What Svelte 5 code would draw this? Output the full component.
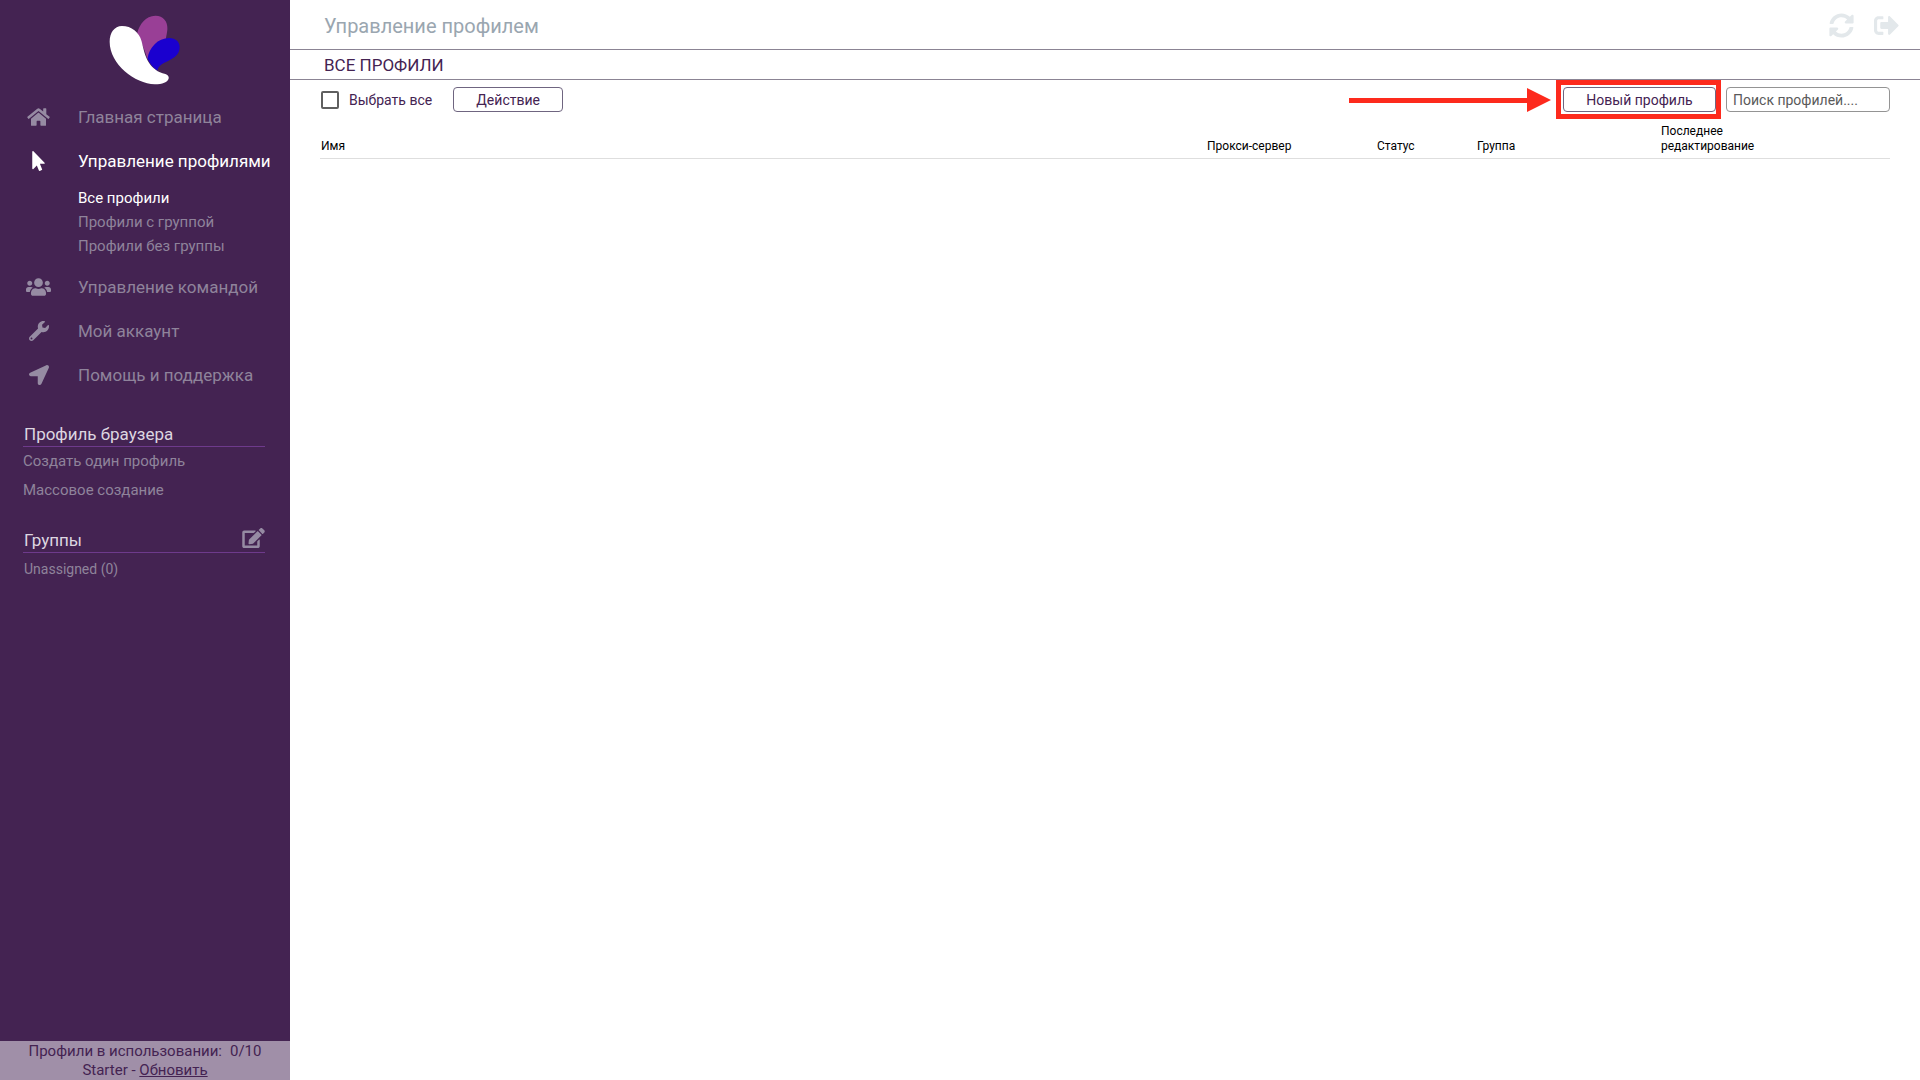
<script lang="ts">
    type NavItem = {
        label: string;
        icon: string;
        active?: boolean;
        children?: string[];
    };

    type Icon = { box: string; width: number; height: number; path: string };

    const icons: Record<string, Icon> = {
        home: {
            box: "0 0 576 512", width: 23, height: 20,
            path: "M280.37 148.26L96 300.11V464a16 16 0 0 0 16 16l112.06-.29a16 16 0 0 0 15.92-16V368a16 16 0 0 1 16-16h64a16 16 0 0 1 16 16v95.64a16 16 0 0 0 16 16.05L464 480a16 16 0 0 0 16-16V300L295.67 148.26a12.19 12.19 0 0 0-15.3 0zM571.6 251.47L488 182.56V44.05a12 12 0 0 0-12-12h-56a12 12 0 0 0-12 12v72.61L318.47 43a48 48 0 0 0-61 0L4.34 251.47a12 12 0 0 0-1.6 16.9l25.5 31A12 12 0 0 0 45.15 301l235.22-193.74a12.19 12.19 0 0 1 15.3 0L530.9 301a12 12 0 0 0 16.9-1.6l25.5-31a12 12 0 0 0-1.7-16.93z"
        },
        pointer: {
            box: "0 0 320 512", width: 13, height: 20,
            path: "M302.189 329.126H196.105l55.831 135.993c3.889 9.428-.555 19.999-9.444 23.999l-49.165 21.427c-9.165 4-19.443-.571-23.332-9.714l-53.053-129.136-86.664 89.138C18.729 472.71 0 463.554 0 447.977V18.299C0 1.899 19.921-6.096 30.277 5.443l284.412 292.542c11.472 11.179 3.007 31.141-12.5 31.141z"
        },
        users: {
            box: "0 0 640 512", width: 25, height: 20,
            path: "M96 224c35.3 0 64-28.7 64-64s-28.7-64-64-64-64 28.7-64 64 28.7 64 64 64zm448 0c35.3 0 64-28.7 64-64s-28.7-64-64-64-64 28.7-64 64 28.7 64 64 64zm32 32h-64c-17.6 0-33.5 7.1-45.1 18.6 40.3 22.1 68.9 62 75.1 109.4h66c17.7 0 32-14.3 32-32v-32c0-35.3-28.7-64-64-64zm-256 0c61.9 0 112-50.1 112-112S381.9 32 320 32 208 82.1 208 144s50.1 112 112 112zm76.8 32h-8.3c-20.8 10-43.9 16-68.5 16s-47.6-6-68.5-16h-8.3C179.6 288 128 339.6 128 403.2V432c0 26.5 21.5 48 48 48h288c26.5 0 48-21.5 48-48v-28.8c0-63.6-51.6-115.2-115.2-115.2zm-223.7-13.4C161.5 263.1 145.6 256 128 256H64c-35.3 0-64 28.7-64 64v32c0 17.7 14.3 32 32 32h65.9c6.3-47.4 34.9-87.3 75.2-109.4z"
        },
        wrench: {
            box: "0 0 512 512", width: 20, height: 20,
            path: "M507.73 109.1c-2.24-9.03-13.54-12.09-20.12-5.51l-74.36 74.36-67.88-11.31-11.31-67.88 74.36-74.36c6.62-6.62 3.43-17.9-5.66-20.16-47.38-11.74-99.55.91-136.58 37.93-39.64 39.64-50.55 97.1-34.05 147.2L18.74 402.76c-24.99 24.99-24.99 65.51 0 90.5 24.99 24.99 65.51 24.99 90.5 0l213.21-213.21c50.12 16.71 107.47 5.68 147.37-34.22 37.07-37.07 49.7-89.32 37.91-136.73zM64 472c-13.25 0-24-10.75-24-24 0-13.26 10.75-24 24-24s24 10.74 24 24c0 13.25-10.75 24-24 24z"
        },
        location: {
            box: "0 0 512 512", width: 20, height: 20,
            path: "M444.52 3.52L28.74 195.42c-47.97 22.39-31.98 92.75 19.19 92.75h175.91v175.91c0 51.17 70.36 67.17 92.75 19.19l191.9-415.78c15.99-38.39-25.59-79.97-63.97-63.97z"
        },
        edit: {
            box: "0 0 576 512", width: 23, height: 20,
            path: "M402.6 83.2l90.2 90.2c3.8 3.8 3.8 10 0 13.8L274.4 405.6l-92.8 10.3c-12.4 1.4-22.9-9.1-21.5-21.5l10.3-92.8L388.8 83.2c3.8-3.8 10-3.8 13.8 0zm162-22.9l-48.8-48.8c-15.2-15.2-39.9-15.2-55.2 0l-35.4 35.4c-3.8 3.8-3.8 10 0 13.8l90.2 90.2c3.8 3.8 10 3.8 13.8 0l35.4-35.4c15.2-15.3 15.2-40 0-55.2zM384 346.2V448H64V128h229.8c3.2 0 6.2-1.3 8.5-3.5l40-40c7.6-7.6 2.2-20.5-8.5-20.5H48C21.5 64 0 85.5 0 112v352c0 26.5 21.5 48 48 48h352c26.5 0 48-21.5 48-48V306.2c0-10.7-12.9-16-20.5-8.5l-40 40c-2.2 2.3-3.5 5.3-3.5 8.5z"
        },
        sync: {
            box: "0 0 512 512", width: 25, height: 25,
            path: "M370.72 133.28C339.458 104.008 298.888 87.962 255.848 88c-77.458.068-144.328 53.178-162.791 126.85-1.344 5.363-6.122 9.15-11.651 9.15H24.103c-7.498 0-13.194-6.807-11.807-14.176C33.933 94.924 134.813 8 256 8c66.448 0 126.791 26.136 171.315 68.685L463.03 40.97C478.149 25.851 504 36.559 504 57.941V192c0 13.255-10.745 24-24 24H345.941c-21.382 0-32.09-25.851-16.971-40.971l41.75-41.749zM32 296h134.059c21.382 0 32.09 25.851 16.971 40.971l-41.75 41.75c31.262 29.273 71.835 45.319 114.876 45.28 77.418-.07 144.315-53.144 162.787-126.849 1.344-5.363 6.122-9.15 11.651-9.15h57.304c7.498 0 13.194 6.807 11.807 14.176C478.067 417.076 377.187 504 256 504c-66.448 0-126.791-26.136-171.315-68.685L48.97 471.03C33.851 486.149 8 475.441 8 454.059V320c0-13.255 10.745-24 24-24z"
        },
        signOut: {
            box: "0 0 512 512", width: 25, height: 25,
            path: "M497 273L329 441c-15 15-41 4.5-41-17v-96H152c-13.3 0-24-10.7-24-24v-96c0-13.3 10.7-24 24-24h136V88c0-21.4 25.9-32 41-17l168 168c9.3 9.4 9.3 24.6 0 34zM192 436v-40c0-6.6-5.4-12-12-12H96c-17.7 0-32-14.3-32-32V160c0-17.7 14.3-32 32-32h84c6.6 0 12-5.4 12-12V76c0-6.6-5.4-12-12-12H96c-53 0-96 43-96 96v192c0 53 43 96 96 96h84c6.6 0 12-5.4 12-12z"
        }
    };

    const nav: NavItem[] = [
        { label: "Главная страница", icon: "home" },
        {
            label: "Управление профилями",
            icon: "pointer",
            active: true,
            children: ["Все профили", "Профили с группой", "Профили без группы"]
        },
        { label: "Управление командой", icon: "users" },
        { label: "Мой аккаунт", icon: "wrench" },
        { label: "Помощь и поддержка", icon: "location" }
    ];

    let currentView = $state("Все профили");
    let allSelected = $state(false);
    let search = $state("");
</script>

{#snippet glyph(name: string)}
    <svg
        viewBox={icons[name].box}
        width={icons[name].width}
        height={icons[name].height}
        fill="currentColor"
        aria-hidden="true">
        <path d={icons[name].path} />
    </svg>
{/snippet}

<div class="app">
    <aside class="sidebar">
        <a class="logo" href="#home" aria-label="Главная">
            <svg viewBox="26 30 214 210" width="71" height="70" aria-hidden="true">
                <path fill="#993f96" d="M142 162C132 130 120 105 111 84C118 58 136 32 166 32C190 32 203 50 202 72C201 84 199 92 197 104Z" />
                <path fill="#1a00cf" d="M142 160C148 128 172 99 208 99C226 99 239 110 239 127C239 148 222 160 204 168C188 175 175 182 172 197C160 190 148 175 142 160Z" />
                <path fill="#fff" d="M65 63C94 63 117 82 124 108C130 132 135 158 147 174C158 190 172 202 196 207C203 209 207 214 206 220C203 233 187 238 164 238C104 237 28 178 28 110C28 84 42 63 65 63Z" />
            </svg>
        </a>

        <nav>
            {#each nav as item}
                <a class="nav-item" class:active={item.active} href="#{item.icon}">
                    <span class="nav-icon">{@render glyph(item.icon)}</span>
                    {item.label}
                </a>
                {#if item.children}
                    <div class="sub-nav">
                        {#each item.children as child}
                            <a
                                href="#profiles"
                                class:active={child === currentView}
                                onclick={() => currentView = child}>{child}</a>
                        {/each}
                    </div>
                {/if}
            {/each}
        </nav>

        <section class="group">
            <h2>Профиль браузера</h2>
            <a href="#create">Создать один профиль</a>
            <a href="#bulk">Массовое создание</a>
        </section>

        <section class="group">
            <h2>
                Группы
                <button class="icon-button" aria-label="Редактировать группы">{@render glyph("edit")}</button>
            </h2>
            <a class="team-link" href="#unassigned">Unassigned (0)</a>
        </section>

        <footer>
            <div class="usage"><span>Профили в использовании:</span><span>0/10</span></div>
            <div>Starter - <a href="#upgrade">Обновить</a></div>
        </footer>
    </aside>

    <main>
        <header>
            <h1>Управление профилем</h1>
            <button class="icon-button" aria-label="Синхронизировать">{@render glyph("sync")}</button>
            <button class="icon-button" aria-label="Выйти">{@render glyph("signOut")}</button>
        </header>
        <h2 class="view-title">ВСЕ ПРОФИЛИ</h2>

        <div class="toolbar">
            <label class="select-all">
                <input type="checkbox" bind:checked={allSelected} />
                Выбрать все
            </label>
            <button class="action">Действие</button>
            <svg class="arrow" viewBox="0 0 202 26" width="202" height="26" aria-hidden="true">
                <path fill="#fd2a1d" d="M0 11H178V1L202 13L178 25V16H0Z" />
            </svg>
            <div class="highlight">
                <button class="create">Новый профиль</button>
            </div>
            <input
                class="search"
                type="text"
                aria-label="Поиск профилей"
                placeholder="Поиск профилей...."
                bind:value={search} />
        </div>

        <table>
            <thead>
                <tr>
                    <th class="name">Имя</th>
                    <th class="proxy">Прокси-сервер</th>
                    <th class="status">Статус</th>
                    <th class="team">Группа</th>
                    <th class="edited">Последнее<br />редактирование</th>
                </tr>
            </thead>
        </table>
    </main>
</div>

<style>
    :global(body) {
        margin: 0;
        background: #fff;
    }
    .app {
        display: flex;
        min-height: 100vh;
        font-family: Roboto, "Noto Sans", sans-serif;
        font-size: 14px;
        color: #442352;
    }
    .app * {
        box-sizing: border-box;
    }
    a {
        color: inherit;
        text-decoration: none;
    }
    button,
    input {
        font: inherit;
        color: inherit;
    }
    button {
        cursor: pointer;
    }
    h1,
    h2 {
        margin: 0;
        font-weight: 400;
    }
    svg {
        display: block;
        flex: none;
    }
    .icon-button {
        border: 0;
        padding: 0;
        background: none;
    }

    .sidebar {
        flex: none;
        display: flex;
        flex-direction: column;
        width: 290px;
        background: #442352;
        color: #8f839b;
    }
    .logo {
        align-self: center;
        padding: 15px 2px 10px 0;
    }
    nav {
        padding-bottom: 2px;
    }
    .nav-item {
        display: flex;
        align-items: center;
        height: 44px;
        font-size: 17px;
        white-space: nowrap;
    }
    .nav-icon {
        display: flex;
        justify-content: center;
        width: 78px;
        padding-right: 1px;
        color: #968ba3;
    }
    .active,
    .active .nav-icon {
        color: #fff;
    }
    .sub-nav {
        display: flex;
        flex-direction: column;
        padding: 3px 0 7px 78px;
        font-size: 15px;
        line-height: 24px;
    }
    .group {
        display: flex;
        flex-direction: column;
        margin: 23px 25px 0 23px;
        font-size: 15px;
        line-height: 29px;
    }
    .group h2 {
        display: flex;
        align-items: flex-start;
        justify-content: space-between;
        height: 25px;
        padding-left: 1px;
        border-bottom: 1px solid #6e3a8c;
        color: #ddd6e0;
        font-size: 17px;
        line-height: 24px;
    }
    .group h2 .icon-button {
        color: #968ba3;
    }
    .group .team-link {
        padding: 2px 0 0 1px;
        font-size: 14px;
    }
    footer {
        margin-top: auto;
        padding-top: 1px;
        background: #a08fa8;
        color: #442352;
        font-size: 15px;
        line-height: 19px;
        text-align: center;
    }
    .usage {
        display: flex;
        justify-content: center;
        gap: 8px;
    }
    footer a {
        text-decoration: underline;
    }

    main {
        flex: 1;
        min-width: 0;
    }
    header {
        display: flex;
        align-items: center;
        gap: 20px;
        height: 50px;
        padding: 2px 21px 0 34px;
        border-bottom: 1px solid #8b8494;
        color: #e3e8eb;
    }
    header h1 {
        flex: 1;
        color: #9aa6b0;
        font-size: 20px;
    }
    .view-title {
        padding: 1px 0 0 34px;
        border-bottom: 1px solid #8b8494;
        font-size: 17px;
        line-height: 28px;
    }
    .toolbar {
        display: flex;
        align-items: center;
        height: 39px;
        padding: 0 30px 0 31px;
    }
    .select-all {
        display: flex;
        align-items: center;
        gap: 10px;
    }
    .select-all input {
        appearance: none;
        width: 18px;
        height: 18px;
        margin: 0;
        border: 2px solid #5f5f5f;
        border-radius: 2px;
    }
    .select-all input:checked {
        background: #442352;
    }
    .action,
    .create,
    .search {
        height: 25px;
        padding: 1px 0 0;
        border: 1px solid #6f6580;
        border-radius: 4px;
        background: #fff;
    }
    .action {
        width: 110px;
        margin-left: 21px;
    }
    .arrow {
        margin-left: auto;
    }
    .highlight {
        margin: 0 5px;
        padding: 2px 0 2px 2px;
        border: 5px solid #fd2a1d;
    }
    .create {
        display: block;
        width: 153px;
    }
    .search {
        width: 164px;
        padding: 1px 6px 0;
        border-color: #949494;
    }
    .search::placeholder {
        color: #5a5a5a;
        opacity: 1;
    }

    table {
        width: calc(100% - 60px);
        margin: 0 30px;
        border-collapse: collapse;
        table-layout: fixed;
        color: #000;
        font-size: 12px;
        line-height: 15px;
    }
    th {
        padding: 5px 0 4px 1px;
        border-bottom: 1px solid #dedede;
        font-weight: 400;
        text-align: left;
        vertical-align: bottom;
    }
    .proxy {
        width: 170px;
    }
    .status {
        width: 100px;
    }
    .team {
        width: 184px;
    }
    .edited {
        width: 230px;
    }
</style>
